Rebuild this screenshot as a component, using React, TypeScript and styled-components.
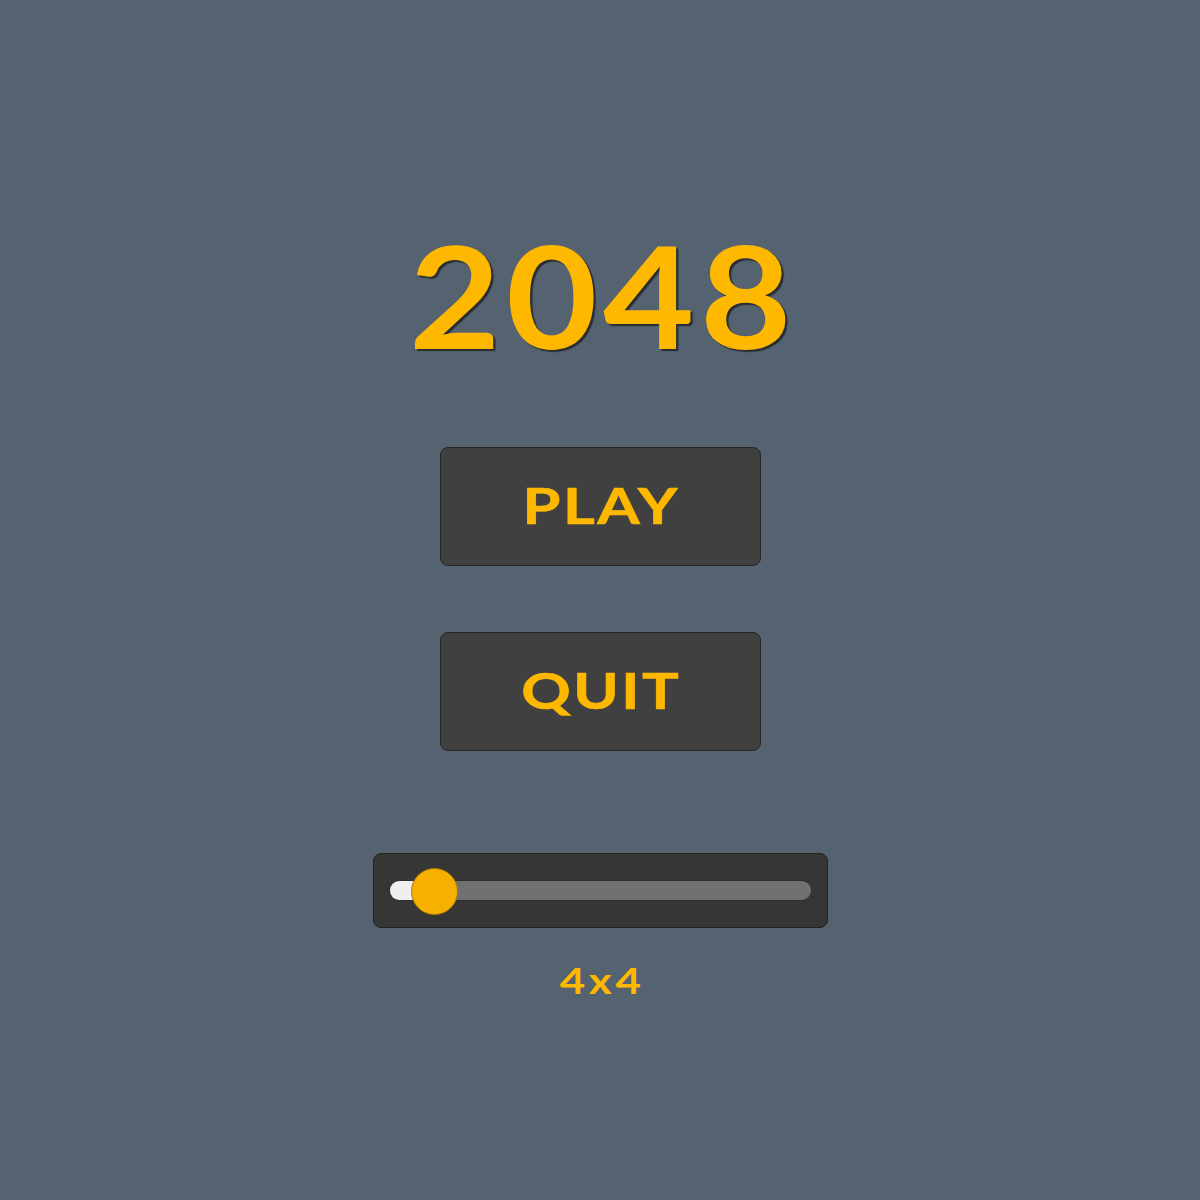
import React from "react";
import styled, { createGlobalStyle } from "styled-components";

const GlobalStyle = createGlobalStyle`
  html, body {
    margin: 0;
    padding: 0;
    background: #55626f;
  }
  #root {
    min-height: 1200px;
  }
`;

const Screen = styled.div`
  height: 1200px;
  display: flex;
  flex-direction: column;
  align-items: center;
  padding-top: 224px;
  box-sizing: border-box;
  font-family: Lato, "Liberation Sans", sans-serif;
  color: #ffb800;
`;

/* the game font is wider than Lato, so stretch a little */
const Title = styled.h1`
  margin: 0;
  height: 140px;
  line-height: 140px;
  font-size: 142px;
  font-weight: 700;
  letter-spacing: 5px;
  padding-left: 5px;
  transform: scaleX(1.11);
  text-shadow: 2px 2px 1px rgba(0, 0, 0, 0.55);
`;

const MenuButton = styled.button<{ $gap: number }>`
  margin-top: ${(p) => p.$gap}px;
  width: 321px;
  height: 119px;
  box-sizing: border-box;
  display: flex;
  align-items: center;
  justify-content: center;
  background: #404040;
  border: 1px solid #262626;
  border-radius: 8px;
  font-family: Lato, "Liberation Sans", sans-serif;
  color: #ffb800;
  cursor: pointer;
  padding: 0 0 2px 0;
`;

const ButtonText = styled.span`
  display: block;
  font-size: 49px;
  font-weight: 700;
  line-height: 1;
  letter-spacing: 2px;
  padding-left: 2px;
  transform: scaleX(1.25);
  -webkit-text-stroke: 0.6px #ffb800;
`;

const SliderPanel = styled.div`
  margin-top: 102px;
  width: 455px;
  height: 75px;
  box-sizing: border-box;
  background: #363636;
  border: 1px solid #222;
  border-radius: 8px;
  display: flex;
  align-items: center;
  padding: 0 15px;
`;

const Track = styled.div`
  position: relative;
  flex: 1;
  height: 21px;
  box-sizing: border-box;
  background: #717171;
  border: 1px solid #2e2e2e;
  border-radius: 11px;
`;

const Fill = styled.div`
  height: 100%;
  background: #efefef;
  border-radius: 10px 0 0 10px;
`;

const Thumb = styled.div`
  position: absolute;
  top: 50%;
  width: 47px;
  height: 47px;
  box-sizing: border-box;
  margin-left: -23px;
  margin-top: -23px;
  border-radius: 50%;
  background: #f6b100;
  border: 1px solid #b07c00;
`;

const SizeLabel = styled.div`
  margin-top: 35px;
  font-size: 36px;
  line-height: 35px;
  font-weight: 700;
  letter-spacing: 3px;
  padding-left: 3px;
  transform: scaleX(1.22);
  color: #ffb800;
`;

export default function App() {
  const value = 0.105;
  return (
    <>
      <GlobalStyle />
      <Screen>
        <Title>2048</Title>
        <MenuButton $gap={83}>
          <ButtonText>PLAY</ButtonText>
        </MenuButton>
        <MenuButton $gap={66}>
          <ButtonText>QUIT</ButtonText>
        </MenuButton>
        <SliderPanel>
          <Track>
            <Fill style={{ width: `${value * 100}%` }} />
            <Thumb style={{ left: `${value * 100}%` }} />
          </Track>
        </SliderPanel>
        <SizeLabel>4x4</SizeLabel>
      </Screen>
    </>
  );
}
